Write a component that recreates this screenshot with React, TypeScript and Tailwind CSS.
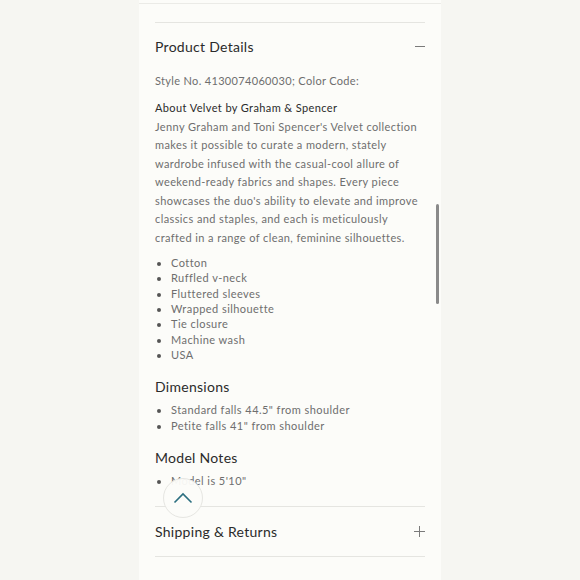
import React from "react";

const bullets1 = ["Cotton", "Ruffled v-neck", "Fluttered sleeves", "Wrapped silhouette", "Tie closure", "Machine wash", "USA"];
const bullets2 = ["Standard falls 44.5\" from shoulder", "Petite falls 41\" from shoulder"];
const para = [
  "Jenny Graham and Toni Spencer's Velvet collection",
  "makes it possible to curate a modern, stately",
  "wardrobe infused with the casual-cool allure of",
  "weekend-ready fabrics and shapes. Every piece",
  "showcases the duo's ability to elevate and improve",
  "classics and staples, and each is meticulously",
  "crafted in a range of clean, feminine silhouettes.",
];

export default function App() {
  const font = { fontFamily: "Lato, 'Noto Sans', sans-serif" };
  return (
    <div className="w-[580px] h-[580px] bg-[#f6f6f2] overflow-hidden" style={font}>
      <div className="relative mx-auto w-[302px] h-[580px] bg-[#fcfcf9]">
        <div className="pt-[3px]">
          <div className="border-t border-[#ebebe7] h-[19px]" />
        </div>
        <div className="px-4">
          <div className="border-t border-[#e5e5e1]" />
          <div className="flex items-center justify-between h-[47px]">
            <span className="text-[14px] tracking-[0.02em] text-[#2b2b2b]">Product Details</span>
            <span className="block w-[10px] h-px bg-[#7a7a7a]" />
          </div>
          <div className="mt-[2px] text-[11px] leading-[18px] tracking-[0.03em] text-[#6e6e6e] whitespace-nowrap">
            Style No. 4130074060030; Color Code:
          </div>
          <div className="mt-[9px] text-[11px] leading-[18.5px] tracking-[0.035em] text-[#2b2b2b] whitespace-nowrap">
            About Velvet by Graham &amp; Spencer
          </div>
          <p className="text-[11px] leading-[18.5px] tracking-[0.036em] text-[#6e6e6e] whitespace-nowrap">
            {para.map((l) => (
              <span key={l} className="block">{l}</span>
            ))}
          </p>
          <ul className="mt-[8px] list-disc pl-4 text-[11px] leading-[15.33px] tracking-[0.04em] text-[#6e6e6e] marker:text-[#555]">
            {bullets1.map((b) => (
              <li key={b}>{b}</li>
            ))}
          </ul>
          <div className="mt-[15px] text-[14px] leading-[20px] tracking-[0.02em] text-[#2b2b2b]">Dimensions</div>
          <ul className="mt-[5px] list-disc pl-4 text-[11px] leading-[15.5px] tracking-[0.04em] text-[#6e6e6e] marker:text-[#555]">
            {bullets2.map((b) => (
              <li key={b}>{b}</li>
            ))}
          </ul>
          <div className="mt-[15px] text-[14px] leading-[20px] tracking-[0.02em] text-[#2b2b2b]">Model Notes</div>
          <ul className="mt-[5px] list-disc pl-4 text-[11px] leading-[15.5px] tracking-[0.04em] text-[#6e6e6e] marker:text-[#555]">
            <li>Model is 5'10"</li>
          </ul>
          <div className="mt-[17px] border-t border-[#e5e5e1]" />
          <div className="flex items-center justify-between h-[49px]">
            <span className="text-[14px] tracking-[0.02em] text-[#2b2b2b]">Shipping &amp; Returns</span>
            <svg width="11" height="11" viewBox="0 0 11 11">
              <path d="M5.5 0v11M0 5.5h11" stroke="#7a7a7a" strokeWidth="1" />
            </svg>
          </div>
          <div className="border-t border-[#e5e5e1]" />
        </div>

        <div className="absolute left-[24px] top-[478px] w-[40px] h-[40px] rounded-full bg-[#fcfcf9]/95 border border-[#e6e6e2] flex items-center justify-center">
          <svg width="20" height="12" viewBox="0 0 20 12">
            <path d="M1.5 10.5L10 2l8.5 8.5" fill="none" stroke="#2c6f80" strokeWidth="1.6" />
          </svg>
        </div>

        <div className="absolute left-[297px] top-[204px] w-[3px] h-[100px] bg-[#8a8a8a] rounded-sm" />
      </div>
    </div>
  );
}
